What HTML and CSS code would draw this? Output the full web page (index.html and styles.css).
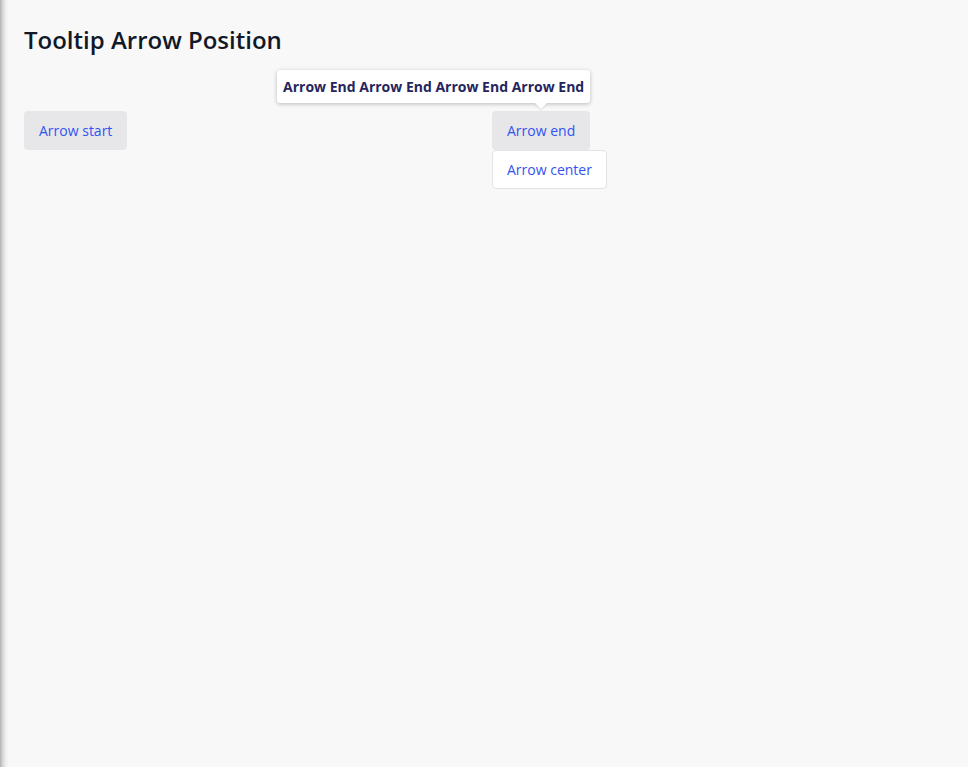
FILE: index.html
```html
<!DOCTYPE html>
<html lang="en">
<head>
<meta charset="utf-8">
<title>Tooltip Arrow Position</title>
<link rel="stylesheet" href="styles.css">
</head>
<body>
<main class="page">
  <h1 class="title">Tooltip Arrow Position</h1>
  <div class="grid">
    <div class="cell">
      <button class="btn btn-muted">Arrow start</button>
    </div>
    <div class="cell stack">
      <div class="anchor">
        <button class="btn btn-muted">Arrow end</button>
        <div class="tooltip">Arrow End Arrow End Arrow End Arrow End</div>
      </div>
      <button class="btn btn-outline">Arrow center</button>
    </div>
  </div>
</main>
</body>
</html>
```

FILE: styles.css
```css
* { box-sizing: border-box; }
html, body { margin: 0; height: 100%; }
body {
  background-color: #f8f8f8;
  background-image: linear-gradient(to right, rgba(0,0,0,0.28) 0, rgba(0,0,0,0.12) 3px, rgba(0,0,0,0.03) 6px, rgba(0,0,0,0) 9px);
  background-repeat: no-repeat;
  font-family: "Open Sans", "Noto Sans", sans-serif;
}
.page {
  padding: 24px;
}
.title {
  margin: 0;
  font-size: 24px;
  line-height: 32px;
  font-weight: 600;
  color: #111827;
}
.grid {
  display: grid;
  grid-template-columns: 1fr 1fr;
  gap: 16px;
  margin-top: 55px;
}
.cell { display: flex; align-items: flex-start; }
.stack { flex-direction: column; }
.anchor { position: relative; }
.btn {
  font-family: inherit;
  font-size: 14px;
  line-height: 21px;
  padding: 9px 15px;
  border-radius: 4px;
  color: #3353f0;
  cursor: pointer;
  margin: 0;
}
.btn-muted {
  background: #e7e7ea;
  border: 0;
}
.btn-outline {
  background: #ffffff;
  border: 1px solid #e3e3e6;
  padding: 8px 14px;
  height: 39px;
}
.tooltip {
  position: absolute;
  right: 0;
  bottom: calc(100% + 8px);
  white-space: nowrap;
  background: #fff;
  color: #25255e;
  font-weight: 700;
  font-size: 14px;
  line-height: 21px;
  padding: 6px 6px;
  border-radius: 3px;
  box-shadow: 0 1px 4px rgba(0,0,0,0.25);
}
.tooltip::after {
  content: "";
  position: absolute;
  top: 100%;
  right: 43px;
  border-left: 6px solid transparent;
  border-right: 6px solid transparent;
  border-top: 6px solid #fff;
  filter: drop-shadow(0 1px 1px rgba(0,0,0,0.12));
}
```
